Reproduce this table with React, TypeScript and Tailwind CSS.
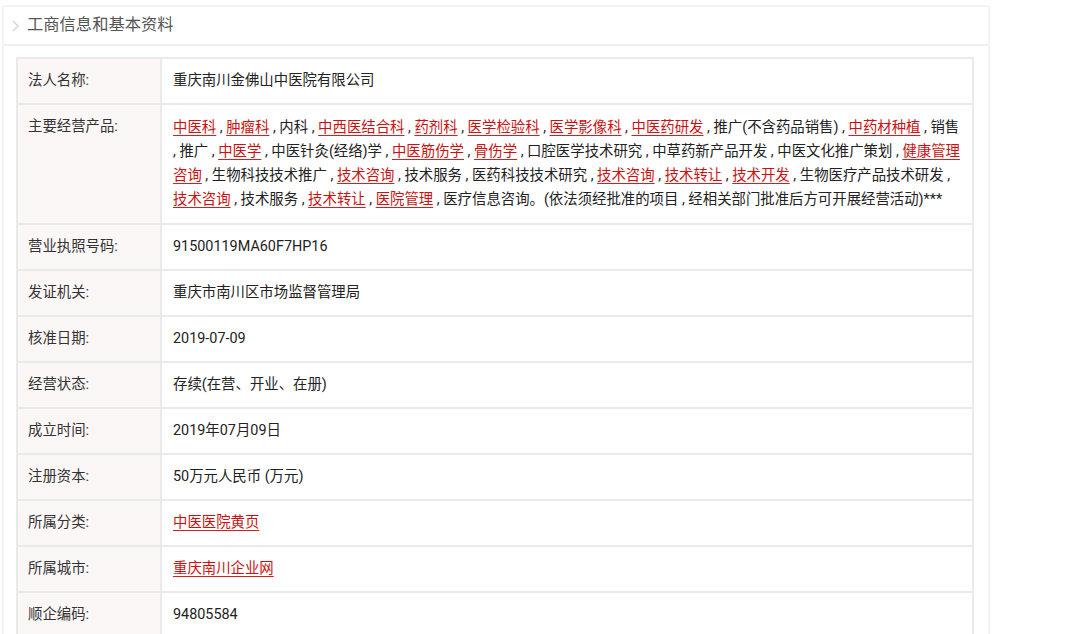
import React from "react";

type Seg = string | { l: string };

const products: Seg[] = [
  { l: "中医科" }, " , ", { l: "肿瘤科" }, " , 内科 , ", { l: "中西医结合科" }, " , ",
  { l: "药剂科" }, " , ", { l: "医学检验科" }, " , ", { l: "医学影像科" }, " , ",
  { l: "中医药研发" }, " , 推广(不含药品销售) , ", { l: "中药材种植" }, " , 销售 , 推广 , ",
  { l: "中医学" }, " , 中医针灸(经络)学 , ", { l: "中医筋伤学" }, " , ", { l: "骨伤学" },
  " , 口腔医学技术研究 , 中草药新产品开发 , 中医文化推广策划 , ", { l: "健康管理咨询" },
  " , 生物科技技术推广 , ", { l: "技术咨询" }, " , 技术服务 , 医药科技技术研究 , ",
  { l: "技术咨询" }, " , ", { l: "技术转让" }, " , ", { l: "技术开发" },
  " , 生物医疗产品技术研发 , ", { l: "技术咨询" }, " , 技术服务 , ", { l: "技术转让" }, " , ",
  { l: "医院管理" }, " , 医疗信息咨询。(依法须经批准的项目 , 经相关部门批准后方可开展经营活动)***",
];

const Link = ({ children }: { children: React.ReactNode }) => (
  <a className="text-[#cc1111] underline decoration-[#cc2222] underline-offset-[3px]">{children}</a>
);

const rows: { label: string; value: React.ReactNode; tall?: boolean }[] = [
  { label: "法人名称:", value: "重庆南川金佛山中医院有限公司" },
  {
    label: "主要经营产品:",
    tall: true,
    value: (
      <>
        {products.map((s, i) =>
          typeof s === "string" ? <span key={i}>{s}</span> : <Link key={i}>{s.l}</Link>
        )}
      </>
    ),
  },
  { label: "营业执照号码:", value: "91500119MA60F7HP16" },
  { label: "发证机关:", value: "重庆市南川区市场监督管理局" },
  { label: "核准日期:", value: "2019-07-09" },
  { label: "经营状态:", value: "存续(在营、开业、在册)" },
  { label: "成立时间:", value: "2019年07月09日" },
  { label: "注册资本:", value: "50万元人民币 (万元)" },
  { label: "所属分类:", value: <Link>中医医院黄页</Link> },
  { label: "所属城市:", value: <Link>重庆南川企业网</Link> },
  { label: "顺企编码:", value: "94805584" },
];

export default function App() {
  return (
    <div
      className="w-[1080px] h-[634px] overflow-hidden bg-white pt-[5px] pl-[2px]"
      style={{ fontFamily: "Roboto, 'Noto Sans CJK SC', sans-serif" }}
    >
      <div className="w-[988px] border-2 border-[#f3f3f3] h-[700px]">
        <div className="h-[39px] border-b-2 border-[#f0f0f0] flex items-center pl-[7px]">
          <svg width="10" height="14" viewBox="0 0 10 14" className="mr-[6px]">
            <path d="M2 2 L7 7 L2 12" fill="none" stroke="#d8d8d8" strokeWidth="1.5" />
          </svg>
          <span className="text-[16.3px] text-[#555]">工商信息和基本资料</span>
        </div>
        <div className="mt-[11px] ml-[12px] w-[958px] border-2 border-[#eaeaea] border-b-0">
          {rows.map((r, i) => (
            <div key={i} className="flex border-b-2 border-[#eaeaea]">
              <div
                className={`w-[144px] shrink-0 bg-[#fcf7f7] border-r-2 border-[#eaeaea] pl-[10px] text-[14.4px] text-[#333] ${
                  r.tall ? "pt-[11px]" : "flex items-center"
                } ${r.tall ? "h-[118px]" : "h-[44px]"}`}
              >
                {r.label}
              </div>
              <div
                className={`flex-1 pl-[11px] pr-[8px] text-[14.4px] text-[#222] ${
                  r.tall ? "pt-[11px] leading-[24px]" : "flex items-center"
                }`}
              >
                <div>{r.value}</div>
              </div>
            </div>
          ))}
        </div>
      </div>
    </div>
  );
}
